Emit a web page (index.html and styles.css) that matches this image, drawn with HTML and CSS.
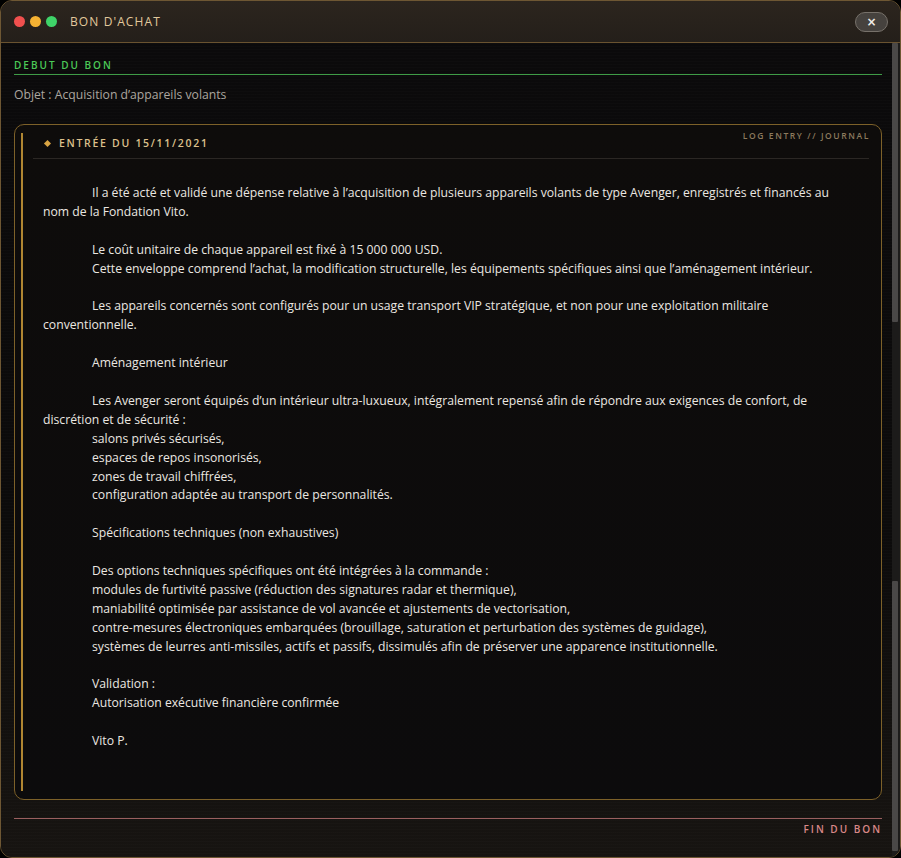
FILE: index.html
```html
<!DOCTYPE html>
<html lang="fr">
<head>
<meta charset="utf-8">
<title>Bon d'achat</title>
<link rel="stylesheet" href="styles.css">
</head>
<body>
<div class="window">
  <header class="titlebar">
    <div class="dots">
      <span class="dot dot-red"></span>
      <span class="dot dot-yellow"></span>
      <span class="dot dot-green"></span>
    </div>
    <div class="title">BON D'ACHAT</div>
    <button class="close" type="button">×</button>
  </header>
  <div class="main">
    <div class="content">
      <div class="start">DEBUT DU BON</div>
      <div class="subject">Objet : Acquisition d’appareils volants</div>
      <section class="card">
        <div class="log-label">LOG ENTRY // JOURNAL</div>
        <div class="card-inner">
          <div class="entry-head"><span class="diamond"></span>ENTRÉE DU 15/11/2021</div>
          <div class="entry-body">
            <p class="para">Il a été acté et validé une dépense relative à l’acquisition de plusieurs appareils volants de type Avenger, enregistrés et financés au nom de la Fondation Vito.</p>
            <p class="gap"></p>
            <p class="item">Le coût unitaire de chaque appareil est fixé à 15 000 000 USD.</p>
            <p class="item">Cette enveloppe comprend l’achat, la modification structurelle, les équipements spécifiques ainsi que l’aménagement intérieur.</p>
            <p class="gap"></p>
            <p class="para">Les appareils concernés sont configurés pour un usage transport VIP stratégique, et non pour une exploitation militaire conventionnelle.</p>
            <p class="gap"></p>
            <p class="para">Aménagement intérieur</p>
            <p class="gap"></p>
            <p class="para">Les Avenger seront équipés d’un intérieur ultra-luxueux, intégralement repensé afin de répondre aux exigences de confort, de discrétion et de sécurité :</p>
            <p class="item">salons privés sécurisés,</p>
            <p class="item">espaces de repos insonorisés,</p>
            <p class="item">zones de travail chiffrées,</p>
            <p class="item">configuration adaptée au transport de personnalités.</p>
            <p class="gap"></p>
            <p class="item">Spécifications techniques (non exhaustives)</p>
            <p class="gap"></p>
            <p class="item">Des options techniques spécifiques ont été intégrées à la commande :</p>
            <p class="item">modules de furtivité passive (réduction des signatures radar et thermique),</p>
            <p class="item">maniabilité optimisée par assistance de vol avancée et ajustements de vectorisation,</p>
            <p class="item">contre-mesures électroniques embarquées (brouillage, saturation et perturbation des systèmes de guidage),</p>
            <p class="item">systèmes de leurres anti-missiles, actifs et passifs, dissimulés afin de préserver une apparence institutionnelle.</p>
            <p class="gap"></p>
            <p class="item">Validation :</p>
            <p class="item">Autorisation exécutive financière confirmée</p>
            <p class="gap"></p>
            <p class="item">Vito P.</p>
          </div>
        </div>
      </section>
      <div class="end">FIN DU BON</div>
    </div>
    <div class="scrollbar">
      <div class="thumb thumb-top"></div>
      <div class="thumb thumb-bottom"></div>
    </div>
  </div>
</div>
</body>
</html>
```

FILE: styles.css
```css
* { box-sizing: border-box; }
html, body {
  margin: 0;
  padding: 0;
  background: #000;
}
body {
  font-family: "Open Sans", "Noto Sans", "DejaVu Sans", sans-serif;
  color: #e6e2dc;
}
.window {
  width: 901px;
  height: 858px;
  border: 1px solid #6e5733;
  border-radius: 12px;
  overflow: hidden;
  display: flex;
  flex-direction: column;
  background: #0c0b0b;
}
.titlebar {
  height: 42px;
  flex: 0 0 42px;
  display: flex;
  align-items: center;
  padding: 0 12px 0 13px;
  background: linear-gradient(180deg, #2c251e 0%, #241f1a 100%);
  border-bottom: 1px solid #6a5330;
}
.dots {
  display: flex;
  gap: 5px;
}
.dot {
  width: 11px;
  height: 11px;
  border-radius: 50%;
}
.dot-red { background: #f0504e; }
.dot-yellow { background: #f5b233; }
.dot-green { background: #3fd469; }
.title {
  margin-left: 13px;
  font-size: 12px;
  letter-spacing: 1.1px;
  color: #e2c99c;
  font-weight: 500;
}
.close {
  margin-left: auto;
  width: 33px;
  height: 20px;
  border-radius: 10px;
  border: 1px solid #77716a;
  background: #46423e;
  color: #f2efe9;
  font-size: 12px;
  line-height: 16px;
  font-weight: 700;
  padding: 0;
  font-family: "DejaVu Sans", sans-serif;
}
.main {
  flex: 1;
  display: flex;
  min-height: 0;
  background:
    repeating-linear-gradient(0deg, rgba(255,255,255,0.012) 0 1px, transparent 1px 3px),
    linear-gradient(180deg, #0b0a0b 0%, #0c0b0b 60%, #171411 100%);
}
.content {
  flex: 1;
  padding: 15px 10px 0 13px;
  display: flex;
  flex-direction: column;
}
.start {
  font-size: 10px;
  line-height: 14px;
  font-weight: 600;
  letter-spacing: 2px;
  color: #4bc957;
  padding-bottom: 2px;
  border-bottom: 1px solid #3f9c47;
}
.subject {
  margin-top: 11px;
  font-size: 12.2px;
  line-height: 18px;
  color: #aca69f;
}
.card {
  position: relative;
  margin-top: 20px;
  border: 1px solid #7d6129;
  border-radius: 10px;
  padding: 8px 12px 8px 6px;
  background: linear-gradient(180deg, #0e0c0b 0%, #0c0b0c 100%);
}
.log-label {
  position: absolute;
  top: 5px;
  right: 11px;
  font-size: 8.5px;
  letter-spacing: 1.6px;
  color: #8c7a5e;
  font-weight: 600;
}
.card-inner {
  border-left: 2px solid #b08632;
  padding-left: 10px;
}
.entry-head {
  display: flex;
  align-items: center;
  padding: 3px 0 8px 10px;
  line-height: 14px;
  font-size: 10.5px;
  font-weight: 600;
  letter-spacing: 1.7px;
  color: #dcc08c;
  border-bottom: 1px solid #2b2724;
}
.diamond {
  width: 5px;
  height: 5px;
  background: #d9a443;
  transform: rotate(45deg);
  margin-right: 9px;
  margin-left: 2px;
}
.entry-body {
  padding: 25px 14px 40px 10px;
  font-size: 12.2px;
  line-height: 18.9px;
  color: #ebe7e1;
}
.entry-body p {
  margin: 0;
  min-height: 18.9px;
}
.para { text-indent: 49px; }
.item { padding-left: 49px; }
.end {
  margin-top: 18px;
  border-top: 1px solid #9a5f5f;
  padding-top: 3px;
  text-align: right;
  font-size: 10px;
  line-height: 14px;
  font-weight: 600;
  letter-spacing: 2px;
  color: #d98888;
}
.scrollbar {
  width: 8px;
  flex: 0 0 8px;
  background: #1c1b1a;
  display: flex;
  flex-direction: column;
  justify-content: space-between;
}
.thumb {
  width: 6px;
  background: #4a4847;
  border-radius: 1px;
}
.thumb-top { height: 279px; }
.thumb-bottom { height: 270px; margin-bottom: 6px; }
```
